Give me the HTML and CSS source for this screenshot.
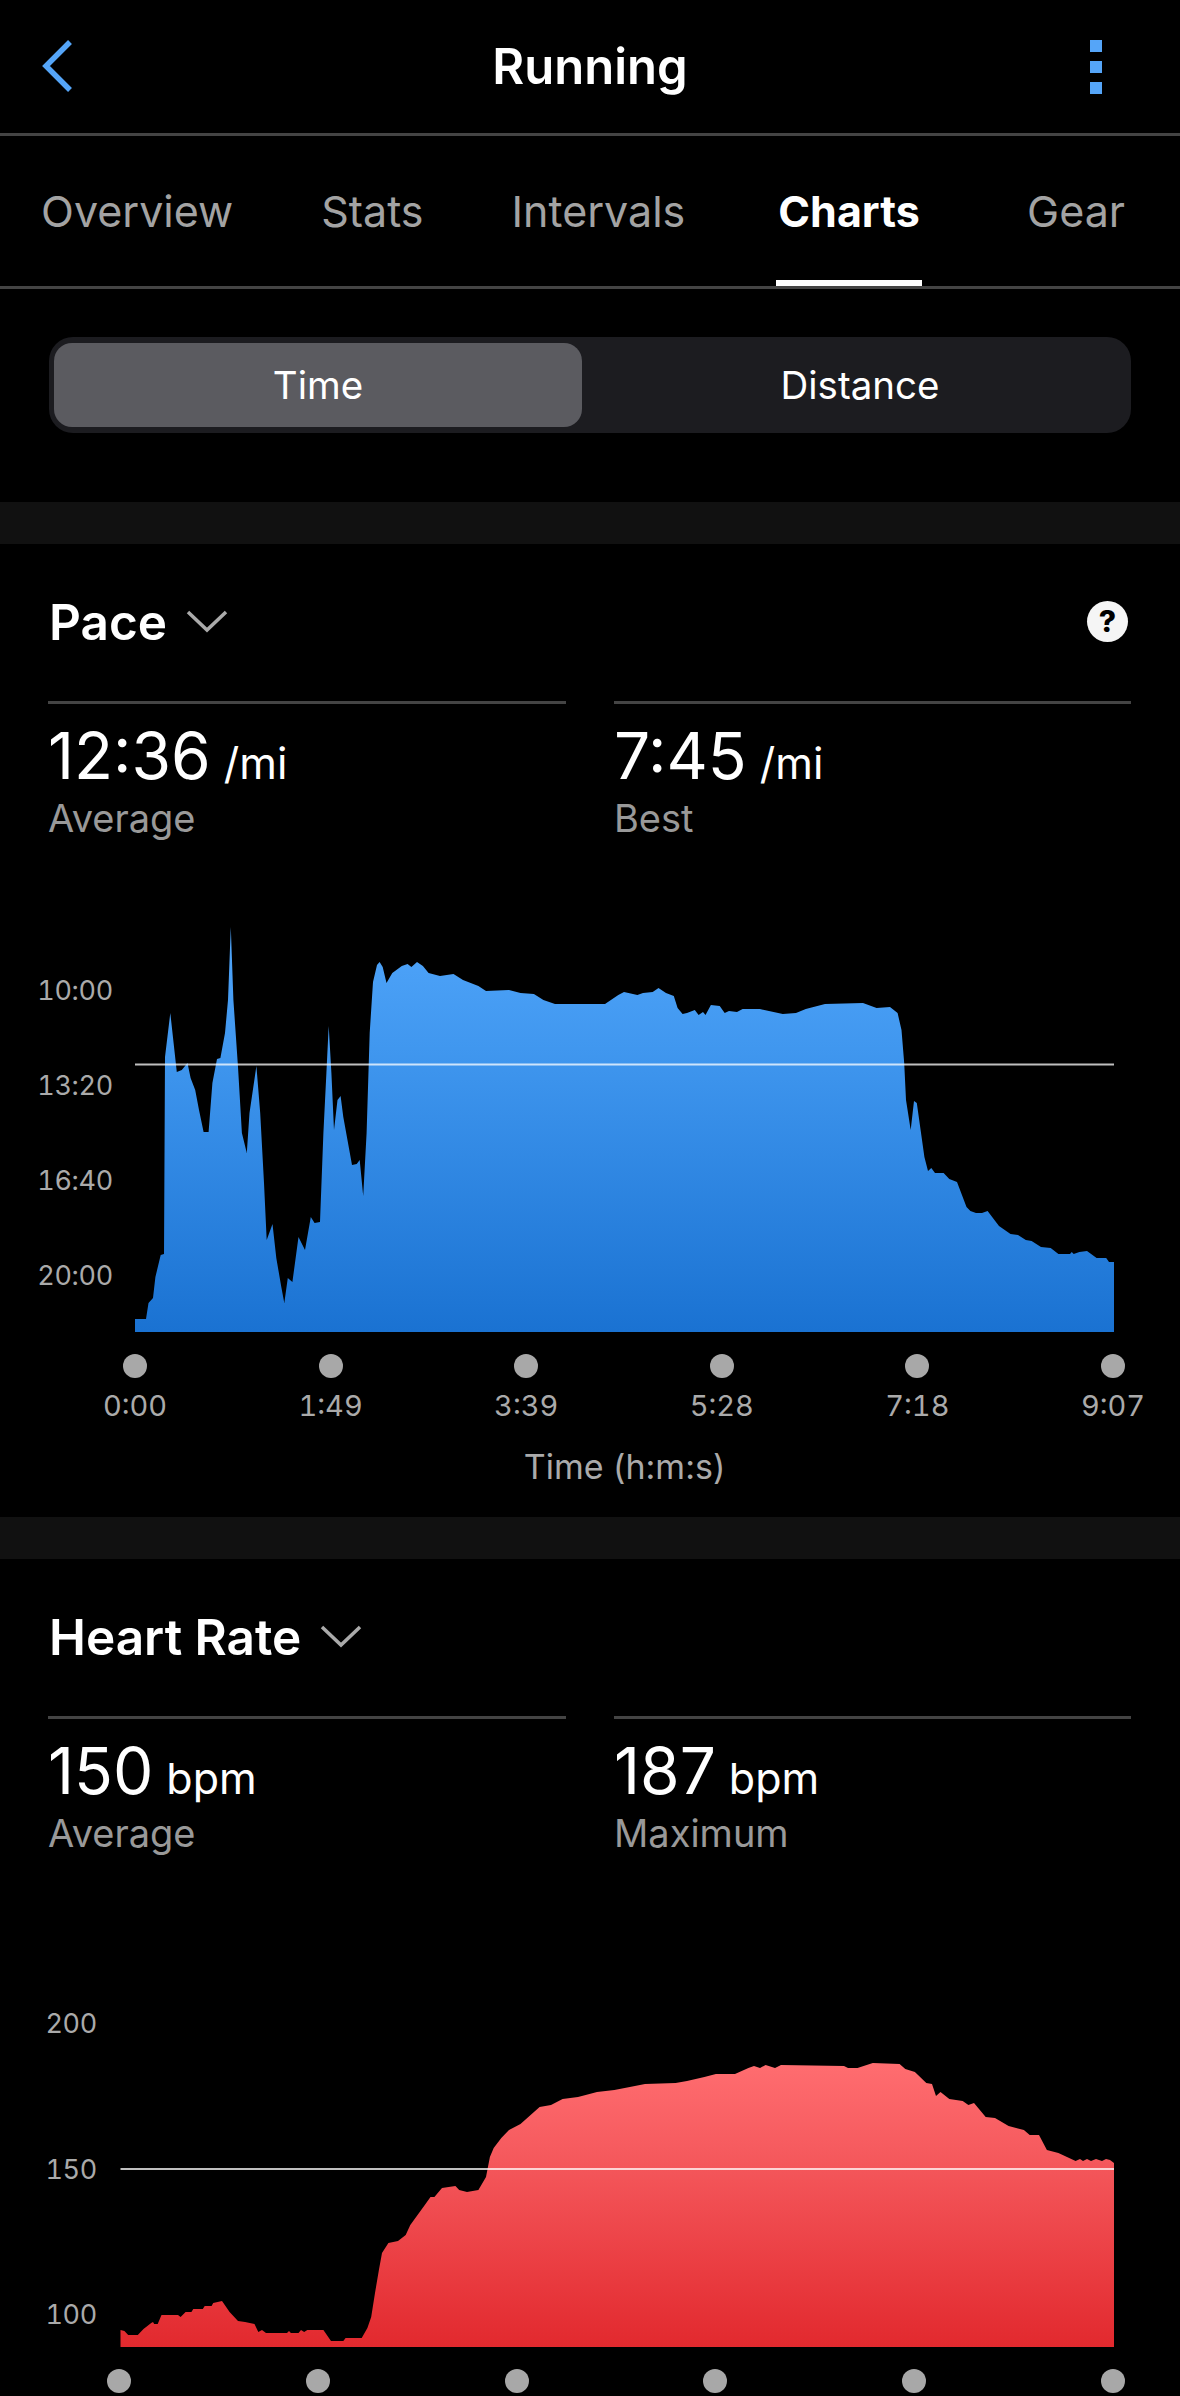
FILE: index.html
```html
<!DOCTYPE html>
<html lang="en">
<head>
    <meta charset="UTF-8">
    <meta name="viewport" content="width=device-width, initial-scale=1.0">
    <title>Running - Charts</title>
    <link rel="stylesheet" href="styles.css">
</head>
<body>
    <header class="top-bar">
        <svg class="back" width="40" height="60" viewBox="0 0 40 60">
            <path d="M30 6 L6 30 L30 54" fill="none" stroke="#55a5f8" stroke-width="5.5"/>
        </svg>
        <h1>Running</h1>
        <div class="more"><span></span><span></span><span></span></div>
    </header>

    <nav class="tabs">
        <a>Overview</a>
        <a>Stats</a>
        <a>Intervals</a>
        <a class="active">Charts</a>
        <a class="last">Gear</a>
    </nav>

    <div class="segment-wrap">
        <div class="segment">
            <button class="selected">Time</button>
            <button>Distance</button>
        </div>
    </div>

    <section class="card">
        <div class="card-head">
            <h2>Pace</h2>
            <svg class="chevron" width="42" height="24" viewBox="0 0 42 24">
                <path d="M2 3 L21 21 L40 3" fill="none" stroke="#aaa" stroke-width="3.5"/>
            </svg>
            <span class="help">?</span>
        </div>
        <div class="stats">
            <div class="stat">
                <div class="value">12:36<small>/mi</small></div>
                <div class="label">Average</div>
            </div>
            <div class="stat">
                <div class="value">7:45<small>/mi</small></div>
                <div class="label">Best</div>
            </div>
        </div>
        <div class="chart pace">
            <div class="y-axis">
                <span>10:00</span>
                <span>13:20</span>
                <span>16:40</span>
                <span>20:00</span>
            </div>
            <svg class="plot" width="985" height="440" viewBox="135 900 985 440">
                <defs>
                    <linearGradient id="blueFill" x1="0" y1="0" x2="0" y2="1">
                        <stop offset="0" stop-color="#50a5fa"/>
                        <stop offset="0.3" stop-color="#4097ef"/>
                        <stop offset="1" stop-color="#1a72d2"/>
                    </linearGradient>
                </defs>
                <path fill="url(#blueFill)" d="M135 1332 L135 1319 146 1319 148.5 1303 153 1298 155.4 1277 160.7 1255 164 1254 165 1057 170.3 1013 176.8 1072 181.8 1070 187.5 1063 190.6 1078 195.2 1090 199 1110 203.6 1132 208.6 1132 212.4 1083 217 1059 220.4 1058 225 1033 228 1000 230.8 927 233.4 1000 238 1067 241.9 1133 246.8 1153 249.5 1113 256.4 1066 260.2 1113 264 1183 266.7 1240 272.5 1224 276.3 1258 281.3 1287 284.3 1303 287.8 1278 292.4 1282 298.5 1237 305 1250 310.8 1217 314.6 1223 320 1222 323.4 1133 326.4 1073 328.7 1026 331.4 1073 334 1130 337.5 1100 340.6 1096 343.3 1117 352 1165 356.7 1164 359.7 1160 363.2 1196 366.6 1133 369.7 1033 373 982 377 965 379.6 962 382.7 967 386.5 983 392.3 973 401.8 966 407.6 964 411.4 967 417 962 422.9 966 428.6 973 440 976 453.5 974 463 980 478.4 986 486 991 509 990 520.5 993 533.9 994 543.4 1000 555 1004 570 1004 605 1004 618.3 995 624 992 637.4 995 643 993 652.7 992 658.5 988 666 993 673.8 996 677.6 1008 682.6 1014 687 1013 694.8 1010 698.6 1015 703 1012 705.5 1015 710.9 1005 719.7 1006 724.7 1013 729 1011 737 1012 742.6 1009 759.9 1009 782.8 1014 796 1013 805.8 1009 825 1004 863 1003 876.6 1008 890 1007 897.6 1013 901.5 1030 904.2 1063 906 1100 910.7 1130 914 1101 916.8 1103 920.6 1130 924.4 1157 928 1171 931.3 1168 935 1173 943.6 1173 949.3 1179 957 1182 966.5 1207 970.4 1211 976 1213 982 1213 987.6 1211 999 1226 1010.5 1234 1018 1235 1025.8 1240 1031.6 1241 1041 1247 1050.7 1248 1058.4 1254 1070 1254 1071.8 1252 1073.7 1254 1079.4 1252 1087 1251 1096.6 1258 1106.2 1258 1109 1262 1114 1262 1114 1332 Z"/>
                <line x1="135" y1="1064.5" x2="1114" y2="1064.5" stroke="#fff" stroke-opacity="0.75" stroke-width="2"/>
            </svg>
        </div>
        <div class="x-axis pace-ticks">
            <div class="tick"><i></i><span>0:00</span></div>
            <div class="tick"><i></i><span>1:49</span></div>
            <div class="tick"><i></i><span>3:39</span></div>
            <div class="tick"><i></i><span>5:28</span></div>
            <div class="tick"><i></i><span>7:18</span></div>
            <div class="tick"><i></i><span>9:07</span></div>
        </div>
        <div class="axis-title">Time (h:m:s)</div>
    </section>

    <section class="card">
        <div class="card-head">
            <h2>Heart Rate</h2>
            <svg class="chevron" width="42" height="24" viewBox="0 0 42 24">
                <path d="M2 3 L21 21 L40 3" fill="none" stroke="#aaa" stroke-width="3.5"/>
            </svg>
        </div>
        <div class="stats">
            <div class="stat">
                <div class="value">150<small>bpm</small></div>
                <div class="label">Average</div>
            </div>
            <div class="stat">
                <div class="value">187<small>bpm</small></div>
                <div class="label">Maximum</div>
            </div>
        </div>
        <div class="chart heart">
            <div class="y-axis">
                <span>200</span>
                <span>150</span>
                <span>100</span>
            </div>
            <svg class="plot" width="1000" height="440" viewBox="120 1915 1000 440">
                <defs>
                    <linearGradient id="redFill" x1="0" y1="0" x2="0" y2="1">
                        <stop offset="0" stop-color="#ff6d70"/>
                        <stop offset="0.3" stop-color="#f65b5f"/>
                        <stop offset="1" stop-color="#e2292e"/>
                    </linearGradient>
                </defs>
                <path fill="url(#redFill)" d="M120.5 2347 L120.5 2330 124.4 2331 128.2 2335 137.8 2335 143.5 2329 151.2 2323 153 2322 154.2 2324 157.7 2324 161.5 2315 178 2315 180.6 2317 185.6 2312 191.4 2312 193.3 2309 202.8 2309 204.7 2306 211.6 2306 213.2 2303 222 2301 229.6 2312 238 2321 245 2322 254.5 2324 258.3 2332 262 2330 266 2333 287 2333 289 2331 290.9 2333 298.5 2333 301 2330 304.2 2332 307.3 2330 323.4 2330 331 2341 343.3 2341 345.6 2338 361.7 2338 367.4 2328 371.2 2317 375 2293 378.9 2270 382 2253 388.4 2243 398 2241 405.7 2235 410.3 2225 424.8 2205 430.5 2197 434.4 2197 442 2188 455.4 2186 459.2 2190 467 2192 478.4 2190 486 2177 489.9 2157 493.7 2148 501.3 2138 509 2130 520.5 2124 539.6 2107 551 2105 562.6 2099 578 2097 585.7 2095 597 2092 614.4 2090 629.8 2087 645 2084 675.7 2083 687 2081 704.4 2077 715.9 2074 735 2074 748.4 2068 754 2066 760 2068 765.6 2065 775 2068 781 2065 844 2066 848 2068 857.5 2068 872.8 2063 899.6 2064 905.3 2069 914.9 2072 926.3 2083 932 2084 936 2096 940.5 2092 949.3 2099 962.7 2101 968.4 2105 974 2103 985.7 2117 995 2118 1008.6 2126 1023.9 2130 1029.7 2135 1039 2135 1046.9 2150 1058.4 2153 1075.6 2161 1080 2159 1083 2161 1087 2159 1091 2161 1096 2159 1102 2161 1106 2159 1110 2160 1114 2163 1114 2347 Z"/>
                <line x1="120.5" y1="2169" x2="1114" y2="2169" stroke="#fff" stroke-opacity="0.75" stroke-width="2"/>
            </svg>
        </div>
        <div class="x-axis heart-ticks">
            <div class="tick"><i></i></div>
            <div class="tick"><i></i></div>
            <div class="tick"><i></i></div>
            <div class="tick"><i></i></div>
            <div class="tick"><i></i></div>
            <div class="tick"><i></i></div>
        </div>
    </section>
</body>
</html>
```

FILE: styles.css
```css
body {
    background: #000;
    color: #fff;
    font-family: 'Inter', 'Liberation Sans', sans-serif;
    margin: 0;
    height: 2396px;
    overflow: hidden;
}
.top-bar {
    display: grid;
    grid-template-columns: 1fr auto 1fr;
    align-items: center;
    height: 133px;
    padding: 0 40px;
    border-bottom: 3px solid #444;
}
.back {
    display: block;
    margin-top: -2px;
}
.top-bar h1 {
    font-size: 49px;
    font-weight: 600;
    line-height: 60px;
    margin: 0;
}
.more {
    justify-self: end;
    display: flex;
    flex-direction: column;
    gap: 9px;
    margin-right: 38px;
}
.more span {
    display: block;
    width: 12px;
    height: 12px;
    background: #55a5f8;
}
.tabs {
    display: flex;
    gap: 84px;
    height: 150px;
    padding: 0 53px 0 39px;
    border-bottom: 3px solid #444;
    font-size: 43px;
}
.tabs a {
    color: #a3a3a3;
    line-height: 150px;
    padding: 0 2px;
    height: 144px;
}
.tabs a.active {
    color: #fff;
    font-weight: 700;
    border-bottom: 6px solid #fff;
    margin-left: 5px;
}
.tabs a.last {
    margin-left: auto;
}
.segment-wrap {
    padding: 48px 49px 69px;
}
.segment {
    display: flex;
    height: 84px;
    padding: 6px 5px;
    background: #1c1c20;
    border-radius: 24px;
}
.segment button {
    flex: 1;
    background: none;
    border: none;
    border-radius: 18px;
    color: #fff;
    font-family: inherit;
    font-size: 38.5px;
    padding: 0 0 0 12px;
}
.segment button.selected {
    flex: 0 0 528px;
    background: #5b5b60;
    padding: 0;
}
.card {
    border-top: 42px solid #111;
}
.card-head {
    display: flex;
    align-items: center;
    gap: 19px;
    height: 157px;
    padding: 0 52px 2px 49px;
    box-sizing: border-box;
}
.card-head h2 {
    font-size: 49.5px;
    font-weight: 600;
    margin: 0;
}
.chevron {
    margin-top: -2px;
}
.help {
    margin-left: auto;
    width: 41px;
    height: 41px;
    border-radius: 50%;
    background: #f5f5f5;
    color: #000;
    font-size: 30px;
    font-weight: 800;
    line-height: 41px;
    text-align: center;
}
.stats {
    display: grid;
    grid-template-columns: 518px 517px;
    gap: 48px;
    height: 199px;
    padding: 0 49px 0 48px;
}
.stat {
    border-top: 3px solid #444;
    padding-top: 14px;
}
.value {
    font-size: 64px;
    line-height: 76px;
}
.value small {
    font-size: 43px;
    margin-left: 13px;
}
.label {
    color: #999;
    font-size: 38px;
    line-height: 44px;
    margin-top: -5px;
}
.chart {
    display: flex;
    height: 440px;
}
.plot {
    display: block;
}
.y-axis {
    display: flex;
    flex-direction: column;
    color: #aaa;
    font-size: 27px;
    font-variant-numeric: tabular-nums;
    letter-spacing: -0.3px;
    text-align: right;
    box-sizing: border-box;
}
.pace .y-axis {
    flex: 0 0 135px;
    padding: 43px 22px 0 0;
    line-height: 95px;
}
.heart .y-axis {
    flex: 0 0 120px;
    padding: 36px 23px 0 0;
    line-height: 145.5px;
}
.x-axis {
    display: flex;
    justify-content: space-between;
    margin-top: 14px;
}
.pace-ticks {
    padding: 0 55px 0 123px;
}
.heart-ticks {
    padding: 0 55px 0 107px;
}
.tick {
    display: flex;
    flex-direction: column;
    align-items: center;
    width: 24px;
    color: #aaa;
    font-size: 29px;
    font-variant-numeric: tabular-nums;
    line-height: 34px;
    white-space: nowrap;
}
.tick i {
    display: block;
    flex: none;
    width: 24px;
    height: 24px;
    border-radius: 50%;
    background: #a8a8a8;
    margin-bottom: 11px;
}
.axis-title {
    color: #aaa;
    font-size: 34px;
    line-height: 40px;
    padding: 24px 66px 30px 135px;
    text-align: center;
}
```
